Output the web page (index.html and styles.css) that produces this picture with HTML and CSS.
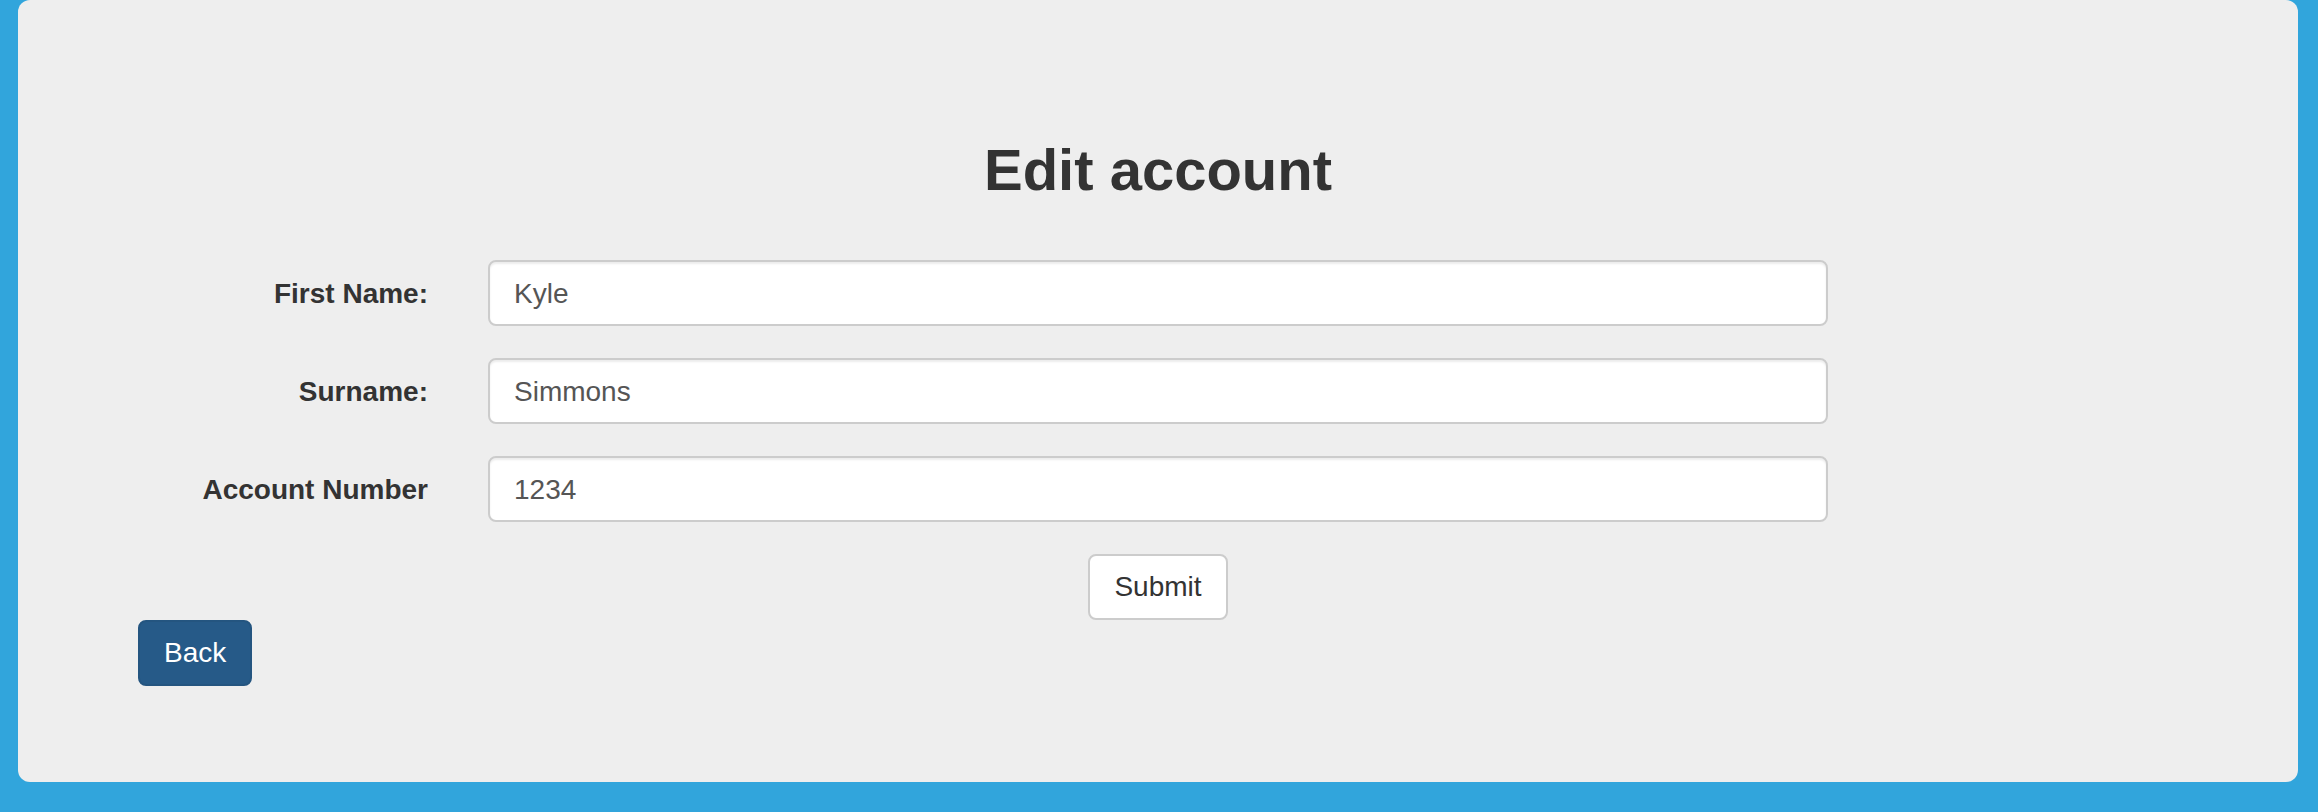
FILE: index.html
```html
<!DOCTYPE html>
<html lang="en">
<head>
<meta charset="utf-8">
<title>Edit account</title>
<link rel="stylesheet" href="styles.css">
</head>
<body>
<div class="jumbotron">
  <h2 class="title">Edit account</h2>
  <form class="form">
    <div class="form-group">
      <label class="control-label" for="first">First Name:</label>
      <input class="form-control" id="first" type="text" value="Kyle">
    </div>
    <div class="form-group">
      <label class="control-label" for="surname">Surname:</label>
      <input class="form-control" id="surname" type="text" value="Simmons">
    </div>
    <div class="form-group">
      <label class="control-label" for="acc">Account Number</label>
      <input class="form-control" id="acc" type="text" value="1234">
    </div>
    <div class="submit-row">
      <button type="button" class="btn btn-default">Submit</button>
    </div>
  </form>
  <div class="back-row">
    <a class="btn btn-primary" href="#">Back</a>
  </div>
</div>
</body>
</html>
```

FILE: styles.css
```css
* {
  box-sizing: border-box;
}

html, body {
  margin: 0;
  padding: 0;
}

body {
  background: #31a5dc;
  padding: 0 20px 30px 18px;
  font-family: "Liberation Sans", Arial, Helvetica, sans-serif;
  font-size: 28px;
  line-height: 40px;
  color: #333333;
}

.jumbotron {
  background: #eeeeee;
  border-radius: 12px;
  padding: 96px 120px;
  height: 782px;
}

.title {
  margin: 41px 0 57px;
  font-size: 58px;
  line-height: 66px;
  font-weight: 700;
  text-align: center;
  color: #333333;
}

.form {
  margin: 0;
}

.form-group {
  display: grid;
  grid-template-columns: 290px 1340px;
  column-gap: 60px;
  margin-bottom: 32px;
}

.control-label {
  text-align: right;
  font-weight: 700;
  padding-top: 14px;
  line-height: 40px;
  color: #333333;
}

.form-control {
  display: block;
  width: 1340px;
  height: 66px;
  padding: 13px 24px 11px;
  font-family: inherit;
  font-size: 28px;
  line-height: 40px;
  color: #555555;
  background: #ffffff;
  border: 2px solid #cccccc;
  border-radius: 8px;
  box-shadow: inset 0 2px 2px rgba(0, 0, 0, 0.075);
  outline: none;
}

.submit-row {
  display: flex;
  justify-content: center;
}

.back-row {
  display: flex;
}

.btn {
  display: inline-block;
  height: 66px;
  padding: 11px 24px;
  font-family: inherit;
  font-size: 28px;
  line-height: 40px;
  border: 2px solid transparent;
  border-radius: 8px;
  text-decoration: none;
  cursor: pointer;
}

.btn-default {
  background: #ffffff;
  border-color: #cccccc;
  color: #333333;
}

.btn-primary {
  background: #265a88;
  border-color: #245580;
  color: #ffffff;
}
```
